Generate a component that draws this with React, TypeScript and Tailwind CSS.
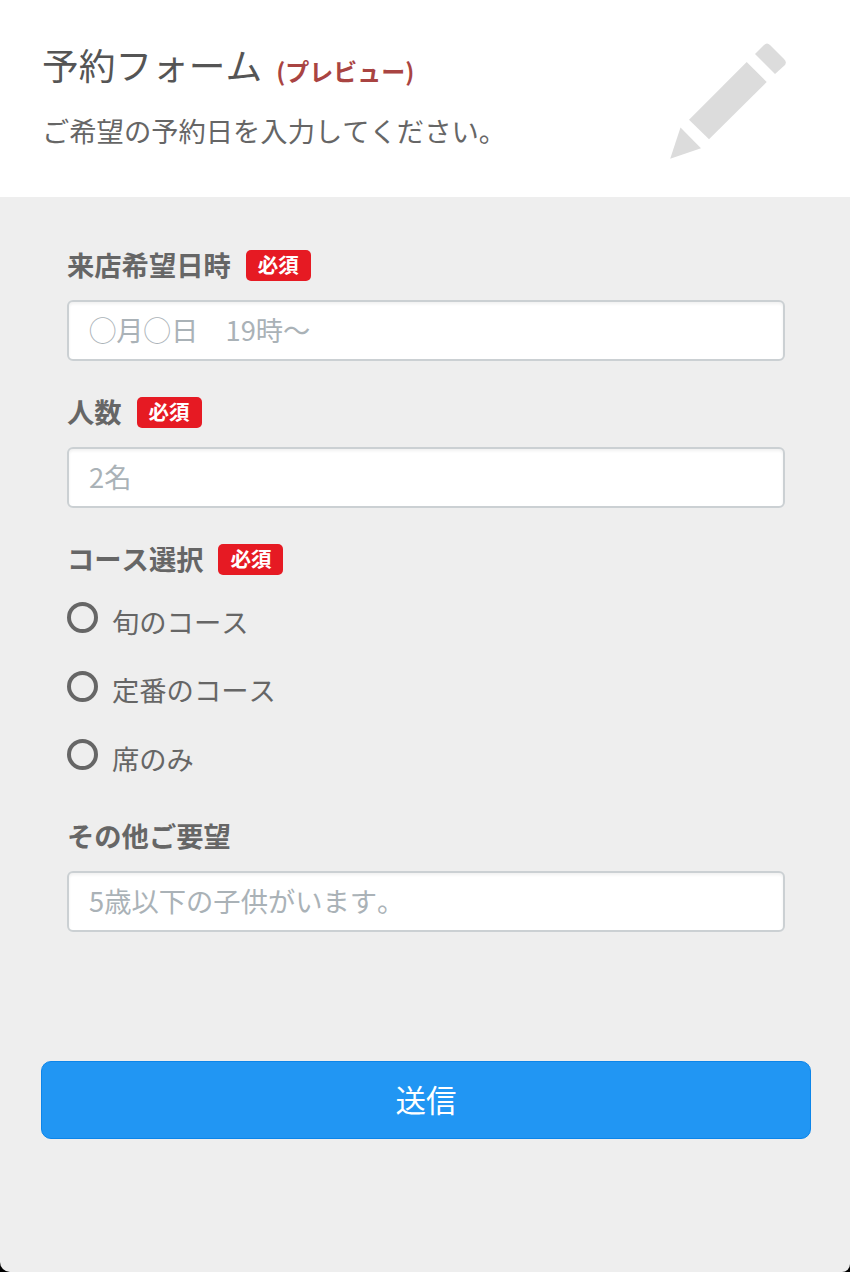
import type { ReactNode } from "react";

type FieldProps = {
  id: string;
  label: string;
  placeholder: string;
  required?: boolean;
};

const courses = ["旬のコース", "定番のコース", "席のみ"];

function PencilIcon() {
  return (
    <svg
      className="h-[116px] w-[117px] shrink-0"
      viewBox="0 0 117 116"
      fill="#dcdcdc"
      aria-hidden="true"
    >
      <path d="M85 11 L94 2 Q97 -1 100 2 L114 16 Q117 19 115 22 L105 31 Z" />
      <path d="M76.7 19 L96.7 39 L39 96.3 L19 76.7 Z" />
      <path d="M10.5 84.5 L31 105.3 L0.2 115.7 Z" />
    </svg>
  );
}

function Label({
  children,
  required,
  htmlFor,
}: {
  children: ReactNode;
  required?: boolean;
  htmlFor?: string;
}) {
  return (
    <label htmlFor={htmlFor} className="flex h-[31px] items-center">
      <span className="pb-[4px] text-[27.3px] leading-[30px] font-bold">{children}</span>
      {required && (
        <span className="ml-[15px] flex h-[31px] w-[65px] items-center justify-center rounded-[5px] bg-[#e61a23] pb-[3px] text-[20.5px] leading-none font-bold text-white">
          必須
        </span>
      )}
    </label>
  );
}

function Field({ id, label, placeholder, required }: FieldProps) {
  return (
    <div>
      <Label htmlFor={id} required={required}>
        {label}
      </Label>
      <input
        id={id}
        type="text"
        placeholder={placeholder}
        className="mt-[19px] block h-[61px] w-full rounded-[6px] border-2 border-[#cbd0d3] bg-white px-[20px] pb-[4px] text-[27.3px] shadow-[inset_0_2px_3px_rgba(0,0,0,0.06)] outline-none placeholder:text-[#aab2b7]"
      />
    </div>
  );
}

export default function App() {
  return (
    <div className="h-[1272px] w-[850px] overflow-hidden bg-black font-['Noto_Sans_CJK_JP',sans-serif] text-[#666] [font-kerning:none]">
      <div className="flex h-full flex-col overflow-hidden rounded-br-[8px] rounded-bl-[10px] bg-[#eee]">
        <header className="flex h-[197px] justify-between bg-white pt-[43px] pr-[63px] pl-[42px]">
          <div>
            <h1 className="flex h-[47px] items-center pb-[4px] text-[36.7px] leading-[43px] text-[#555]">
              予約フォーム
              <small className="mt-[11px] ml-[14px] text-[24px] font-bold text-[#a94442]">
                (プレビュー)
              </small>
            </h1>
            <p className="mt-[20px] text-[27.3px] leading-[40px]">
              ご希望の予約日を入力してください。
            </p>
          </div>
          <PencilIcon />
        </header>

        <form className="flex flex-col pt-[53px]">
          <div className="flex flex-col pr-[65px] pl-[67px]">
            <div className="flex flex-col gap-[36px]">
              <Field id="date" label="来店希望日時" placeholder="◯月◯日　19時〜" required />
              <Field id="people" label="人数" placeholder="2名" required />
              <Label required>コース選択</Label>
            </div>

            <div className="mt-[27px]">
              {courses.map((course) => (
                <label key={course} className="flex h-[68.5px] items-start">
                  <input
                    type="radio"
                    name="course"
                    className="size-[31px] shrink-0 appearance-none rounded-full border-4 border-[#666]"
                  />
                  <span className="mt-[3.5px] ml-[14px] text-[27.3px] leading-[31px]">
                    {course}
                  </span>
                </label>
              ))}
            </div>

            <div className="mt-[13.5px]">
              <Field id="note" label="その他ご要望" placeholder="5歳以下の子供がいます。" />
            </div>
          </div>

          <button
            type="button"
            className="mt-[128.5px] mr-[39px] ml-[41px] flex h-[78px] items-center justify-center rounded-[10px] border border-[#0c85e9] bg-[#2196f3] text-[30.5px] text-white"
          >
            送信
          </button>
        </form>
      </div>
    </div>
  );
}
